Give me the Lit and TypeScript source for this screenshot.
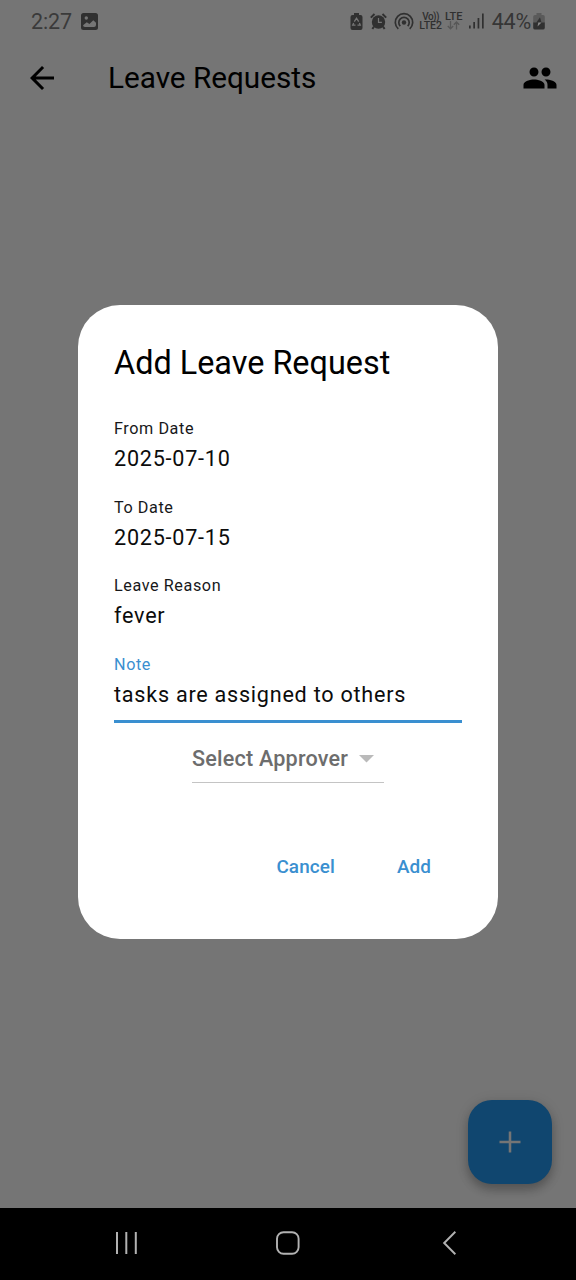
import { LitElement, html, css, svg } from "lit";
import { customElement, property } from "lit/decorators.js";

@customElement("status-bar")
class StatusBar extends LitElement {
  static styles = css`
    :host { display: flex; align-items: center; height: 42px; box-sizing: border-box; padding: 0 31px 0 31px; color: #303030; font-size: 21.5px; }
    svg { display: block; flex: none; fill: currentColor; }
    .time { letter-spacing: -0.1px; color: #3a3a3a; }
    .photo { margin-left: 9px; }
    .right { margin-left: auto; display: flex; align-items: center; }
    .alarm { margin-left: 7px; }
    .cast { margin-left: 7px; }
    .stack { font: 500 10.5px/9.5px Roboto, sans-serif; display: flex; flex-direction: column; align-items: center; }
    .volte { margin-left: 6px; width: 22px; white-space: nowrap; }
    .vo { font-size: 10px; letter-spacing: -0.5px; }
    .lte { margin-left: 3px; width: 18px; font-size: 11px; }
    .signal { margin-left: 6px; }
    .pct { margin-left: 7px; letter-spacing: -0.2px; color: #363636; }
    .charge { margin-left: 2px; }
  `;
  render() {
    return html`
      <span class="time">2:27</span>
      <svg class="photo" width="17" height="17" viewBox="0 0 17 17">${svg`<rect width="17" height="17" rx="2.500"/><circle cx="5.300" cy="5" r="1.700" fill="#757575"/><path fill="#757575" d="M2 12.200l3.800-3 2.600 1.900 3.900-3.900 2.700 2.600V12a2 2 0 0 1-2 2H4a2 2 0 0 1-2-2z"/>`}</svg>
      <div class="right">
        <svg width="13" height="17" viewBox="0 0 13 17">${svg`<path d="M4 0h5v2h1.500A2 2 0 0 1 12.500 4v11a2 2 0 0 1-2 2h-8a2 2 0 0 1-2-2V4a2 2 0 0 1 2-2H4z"/><path d="M4.300 8.700l2.200-3.500 2.200 3.500M9.400 10l.9 2.200H7.500M5.500 12.200H2.700l1-2.200" fill="none" stroke="#757575" stroke-width="1.300"/>`}</svg>
        <svg class="alarm" width="17" height="17" viewBox="0 0 17 17">${svg`<circle cx="8.500" cy="9" r="6.700"/><path d="M.8 4.600L4.500 1M16.200 4.600L12.500 1M4 13.500L2.400 16M13 13.500l1.600 2.500" stroke="currentColor" stroke-width="2"/><path d="M8.500 5v4.400h3.400" fill="none" stroke="#757575" stroke-width="1.200"/>`}</svg>
        <svg class="cast" width="20" height="18" viewBox="0 0 20 18">${svg`<circle cx="10" cy="10.500" r="2.200"/><path d="M6.300 14.200a5.200 5.200 0 1 1 7.400 0M4.300 16.900a8.700 8.700 0 1 1 11.400 0" fill="none" stroke="currentColor" stroke-width="1.700"/>`}</svg>
        <div class="stack volte"><span class="vo">Vo))</span><span>LTE2</span></div>
        <div class="stack lte"><span>LTE</span>
          <svg width="13" height="9" viewBox="0 0 13 9">${svg`<path d="M3.500 0v7.500M.8 5l2.700 2.800L6.200 5M9.500 8.500V1M6.800 3.700L9.500 1l2.700 2.700" fill="none" stroke="#575757" stroke-width="1.300"/>`}</svg></div>
        <svg class="signal" width="16" height="16" viewBox="0 0 16 16">${svg`<path d="M0 12.500h1.700v3H0zM4.300 9H6v6.500H4.300zM8.600 5h1.700v10.500H8.600zM13 .5h1.700v15H13z"/>`}</svg>
        <span class="pct">44%</span>
        <svg class="charge" width="12" height="17" viewBox="0 0 12 17">${svg`<path fill="#5a5a5a" d="M3.500 0h5v2H10a1.800 1.800 0 0 1 1.800 1.800V10H.2V3.800A1.800 1.800 0 0 1 2 2h1.500z"/><path d="M.2 9.500h11.600V15A1.800 1.800 0 0 1 10 16.500H2A1.800 1.800 0 0 1 .2 15z"/><path fill="#303030" d="M7 4.300L3.200 9.700h5.300z"/><path fill="#8a8a8a" d="M5.300 9.500L4.500 13.500l4-4z"/>`}</svg>
      </div>`;
  }
}

@customElement("form-field")
class FormField extends LitElement {
  @property() label = "";
  @property() value = "";
  @property({ type: Boolean, reflect: true }) focused = false;
  static styles = css`
    :host { display: block; height: 78.4px; box-sizing: border-box; color: #17181a; letter-spacing: 0.75px; }
    .label { font-size: 16.2px; line-height: 24px; letter-spacing: 0.58px; }
    .value { font-size: 21.6px; line-height: 36px; color: #0c0c0c; }
    :host([focused]) { height: 70.4px; border-bottom: 3px solid #3a8fd0; }
    :host([focused]) .label { color: #3a8fd0; }
  `;
  render() {
    return html`<div class="label">${this.label}</div><div class="value">${this.value}</div>`;
  }
}

@customElement("app-root")
class AppRoot extends LitElement {
  static styles = css`
    :host { display: flex; flex-direction: column; position: relative; width: 576px; height: 1280px; overflow: hidden; background: #757575; font-family: Roboto, sans-serif; color: #000; }
    svg { display: block; flex: none; }
    .appbar { height: 72px; display: flex; align-items: center; padding: 0 18px 0 24px; }
    .heading { margin-left: 48px; font-size: 29.7px; line-height: 40px; }
    .people { margin-left: auto; }
    .body { flex: 1; display: flex; align-items: flex-end; justify-content: flex-end; padding: 24px; }
    .fab { width: 84px; height: 84px; border-radius: 24px; background: #10466f; display: grid; place-items: center; box-shadow: 0 6px 10px rgba(0,0,0,.22), 0 2px 14px rgba(0,0,0,.12); }
    .nav { height: 72px; box-sizing: border-box; padding-bottom: 2px; background: #000; display: grid; grid-template-columns: 253px 69px 254px; align-items: center; justify-items: center; }
    .overlay { position: absolute; inset: 36px 0 72px; display: flex; align-items: center; justify-content: center; }
    .dialog { width: 420px; height: 634px; box-sizing: border-box; border-radius: 42px; background: #fff; padding: 37px 36px 36px; display: flex; flex-direction: column; }
    .title { font-size: 32.4px; line-height: 43px; margin-bottom: 32.400px; }
    .select { align-self: center; width: 192px; height: 48px; margin-top: 12.400px; box-sizing: border-box; border-bottom: 1px solid #c4c4c4; display: flex; align-items: center; justify-content: space-between; font-size: 21.6px; font-weight: 500; color: #6d6d6d; letter-spacing: 0.2px; white-space: nowrap; }
    .arrow { margin-right: 10px; }
    .actions { margin-top: auto; margin-bottom: 18.400px; display: flex; justify-content: flex-end; gap: 62px; padding-right: 31px; font-size: 18.9px; font-weight: 500; line-height: 36px; letter-spacing: 0.1px; color: #3a8fd0; }
  `;
  render() {
    return html`
      <status-bar></status-bar>
      <div class="appbar">
        <svg width="36" height="36" viewBox="0 0 24 24"><path d="M20 11H7.830l5.590-5.590L12 4l-8 8 8 8 1.410-1.410L7.830 13H20z"/></svg>
        <div class="heading">Leave Requests</div>
        <svg class="people" width="36" height="36" viewBox="0 0 24 24"><path d="M16 11c1.660 0 2.990-1.340 2.990-3S17.660 5 16 5c-1.660 0-3 1.340-3 3s1.340 3 3 3zm-8 0c1.660 0 2.990-1.340 2.990-3S9.660 5 8 5C6.340 5 5 6.340 5 8s1.340 3 3 3zm0 2c-2.330 0-7 1.170-7 3.500V19h14v-2.500c0-2.330-4.670-3.500-7-3.500zm8 0c-.29 0-.62.02-.97.05 1.160.84 1.970 1.970 1.970 3.450V19h6v-2.500c0-2.330-4.670-3.500-7-3.500z"/></svg>
      </div>
      <div class="body"><div class="fab"><svg width="36" height="36" viewBox="0 0 24 24"><path fill="#757575" d="M19 12.850h-6.150V19h-1.700v-6.150H5v-1.700h6.150V5h1.700v6.150H19z"/></svg></div></div>
      <div class="nav">
        <svg width="24" height="24" viewBox="0 0 24 24"><path d="M2 1v22M11.300 1v22M20.800 1v22" stroke="#b2b2b2" stroke-width="2"/></svg>
        <svg width="24" height="24" viewBox="0 0 24 24"><rect x="1" y="1.200" width="21.600" height="21.600" rx="6.500" fill="none" stroke="#b2b2b2" stroke-width="1.900"/></svg>
        <svg width="14" height="24" viewBox="0 0 14 24"><path d="M13.400 .8L2.200 12 13.400 23.200" fill="none" stroke="#b2b2b2" stroke-width="2"/></svg>
      </div>
      <div class="overlay">
        <div class="dialog">
          <div class="title">Add Leave Request</div>
          <form-field label="From Date" value="2025-07-10"></form-field>
          <form-field label="To Date" value="2025-07-15"></form-field>
          <form-field label="Leave Reason" value="fever"></form-field>
          <form-field label="Note" value="tasks are assigned to others" focused></form-field>
          <div class="select"><span>Select Approver</span><svg class="arrow" width="15" height="8" viewBox="0 0 15 8"><path d="M0 0h15L7.500 7.500z" fill="#bababa"/></svg></div>
          <div class="actions"><span>Cancel</span><span>Add</span></div>
        </div>
      </div>`;
  }
}
